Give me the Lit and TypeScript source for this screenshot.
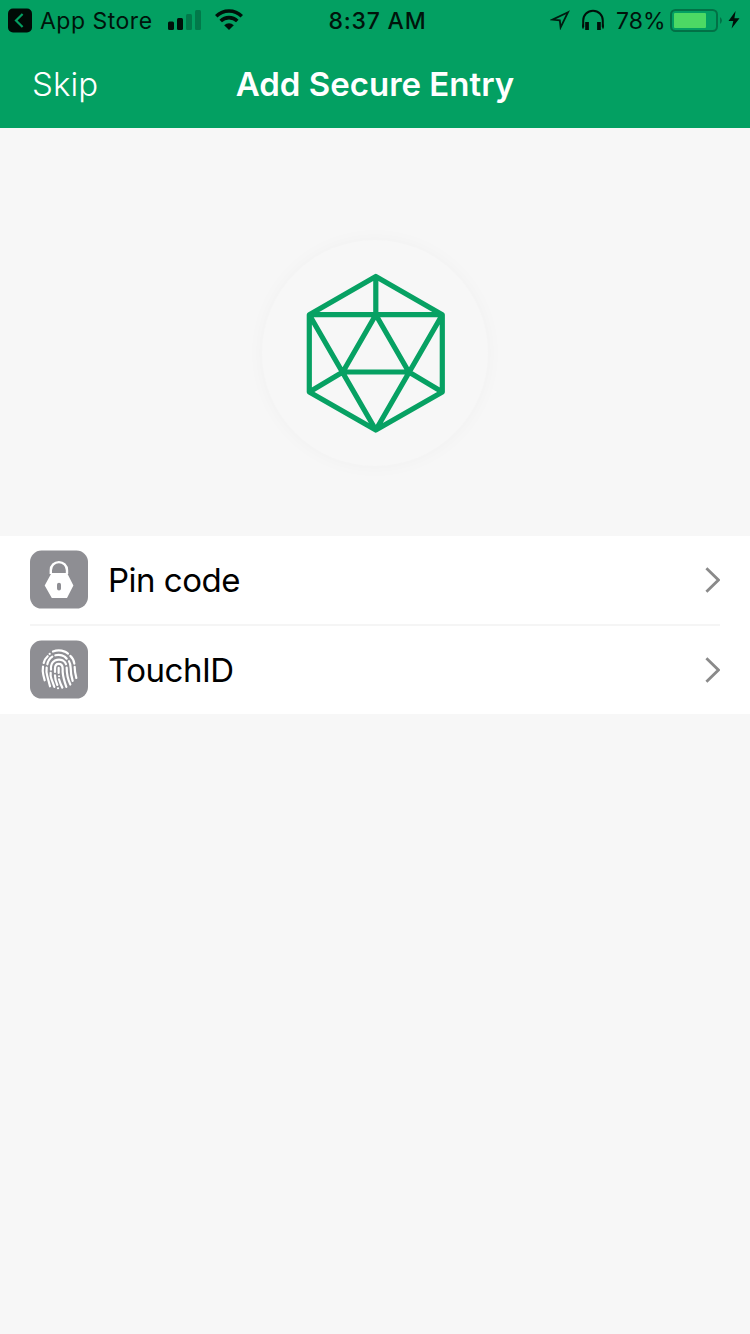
import { LitElement, html, css, svg } from "lit";
import { customElement, property } from "lit/decorators.js";

const lockGlyph = svg`
  <path d="M20.8 23.5V19.6a8 8 0 0 1 16.2 0V23.5" fill="none" stroke="#fff" stroke-width="2.4"/>
  <path fill-rule="evenodd" d="M21.5 22.3h15.6L43.4 35 37 47.4H21.8L14.700 35zM29 32.2a2 2 0 0 0-2 2v3.6a2 2 0 0 0 4 0v-3.6a2 2 0 0 0-2-2z" fill="#fff"/>`;

const fingerprintGlyph = svg`
  <g transform="scale(.33333)" fill="none" stroke="#fff" stroke-width="6.6" stroke-linecap="round">
    <path d="M69 33Q86 26 104 33Q110 36 114 39"/>
    <path d="M59 40h.1"/>
    <path d="M41 67Q44 55 53 47"/>
    <path d="M121 46Q131 55 133 69"/>
    <path d="M39 78Q37 91 40 103L44 119"/>
    <path d="M134 79Q134 93 139 112"/>
    <path d="M52 71Q55 56 67 48"/>
    <path d="M76 44Q92 40 104 48L110 54"/>
    <path d="M117 62Q122 70 122 82Q122 101 128 121"/>
    <path d="M50 81Q48 95 52 107L60 137"/>
    <path d="M63 87Q61 67 75 60Q87 54 99 60Q106 64 108 71"/>
    <path d="M62 97Q61 106 64 114L73 139"/>
    <path d="M110 81Q110 109 121 132"/>
    <path d="M75 94V84Q75 70 86 70Q98 70 98 84V94Q99 111 109 139"/>
    <path d="M75 104Q75 118 82 133"/>
    <path d="M86 82V97"/>
    <path d="M87 107h.1"/>
    <path d="M87 116Q91 130 97 141"/>
    <path d="M84 143h.1"/>
  </g>`;

@customElement("entry-row")
export class EntryRow extends LitElement {
  @property() label = "";
  @property() kind = "lock";

  static styles = css`
    :host { display: flex; align-items: center; height: 88px; }
    .tile { width: 58px; height: 58px; margin-right: 20px; flex: none; overflow: visible; }
    .label {
      flex: 1;
      font-size: 33px;
      line-height: 44px;
      letter-spacing: -.5px;
      color: #000;
      white-space: nowrap;
    }
    .chevron { width: 16px; height: 28px; flex: none; }
  `;

  render() {
    return html`
      <svg class="tile" viewBox="0 .4 58 58">
        <rect width="58" height="58" rx="11.5" fill="#8e8e93"/>
        ${this.kind === "lock" ? lockGlyph : fingerprintGlyph}
      </svg>
      <div class="label">${this.label}</div>
      <svg class="chevron" viewBox="0 0 16 28">
        <path d="M2.4 2.2L14.4 14 2.4 25.8" fill="none" stroke="#8a8a8a" stroke-width="2.8"/>
      </svg>`;
  }
}

@customElement("app-root")
export class AppRoot extends LitElement {
  static styles = css`
    :host {
      display: flex;
      flex-direction: column;
      width: 750px;
      height: 1334px;
      background: #f7f7f7;
      font-family: Inter, "Liberation Sans", sans-serif;
      overflow: hidden;
    }
    header { background: #03a062; height: 128px; flex: none; }
    .status {
      display: grid;
      grid-template-columns: 1fr auto 1fr;
      align-items: center;
      height: 40px;
      color: #00140b;
      font-size: 23px;
      line-height: 38px;
      white-space: nowrap;
    }
    .left, .right { display: flex; align-items: center; height: 40px; }
    .left { padding-left: 8px; }
    .right { justify-content: flex-end; padding-right: 10px; }
    .back { width: 24px; height: 24px; margin-right: 8px; overflow: visible; }
    .store { letter-spacing: .5px; width: 119px; padding-top: 2px; }
    .signal { width: 34px; height: 22px; margin-left: 9px; }
    .wifi { width: 28px; height: 22px; margin-left: 13px; }
    .time { font-weight: 500; letter-spacing: .8px; padding: 2px 0 0 5px; }
    .location { width: 20px; height: 20px; margin-right: 12px; }
    .phones { width: 22px; height: 22px; margin-right: 12px; }
    .percent { width: 49px; margin-right: 5px; padding-top: 2px; }
    .battery { width: 53px; height: 24px; margin-right: 5px; overflow: visible; }
    .bolt { width: 12px; height: 20px; }
    nav {
      display: grid;
      grid-template-columns: 1fr auto 1fr;
      align-items: center;
      height: 88px;
      color: #fff;
      font-size: 33px;
      line-height: 44px;
      white-space: nowrap;
    }
    .skip { padding-left: 32px; font-weight: 350; letter-spacing: .1px; }
    .title { font-weight: 600; }
    .hero {
      display: flex;
      align-items: center;
      justify-content: center;
      height: 408px;
      flex: none;
    }
    .disc {
      display: flex;
      align-items: center;
      justify-content: center;
      width: 226px;
      height: 226px;
      margin-top: 42px;
      border-radius: 50%;
      background: #f7f7f7;
      box-shadow: 0 0 18px rgba(0, 0, 0, .03);
    }
    .gem { width: 140px; height: 160px; }
    .list { background: #fff; padding: 0 30px; height: 178px; flex: none; }
    .divider { height: 2px; background: #f5f5f5; }
  `;

  render() {
    return html`
      <header>
        <div class="status">
          <div class="left">
            <svg class="back" viewBox="0 -.5 24 24">
              <rect width="24" height="24" rx="5" fill="#000b06"/>
              <path d="M14.6 5.5L8 12l6.6 6.500" fill="none" stroke="#03a062" stroke-width="2.2"/>
            </svg>
            <span class="store">App Store</span>
            <svg class="signal" viewBox="0 0 34 22">
              <rect x="0" y="12.5" width="6" height="8.5" rx="1.5" fill="#001009"/>
              <rect x="9" y="9" width="6" height="12" rx="1.5" fill="#001009"/>
              <rect x="18" y="5" width="6" height="16" rx="1.5" fill="#02794a"/>
              <rect x="27" y="1" width="6" height="20" rx="1.5" fill="#02794a"/>
            </svg>
            <svg class="wifi" viewBox="0 0 28 22">
              <path d="M1.2 7.3a18.2 18.2 0 0 1 25.6 0M5.7 12a11.9 11.9 0 0 1 16.6 0" fill="none" stroke="#001009" stroke-width="3.6"/>
              <path d="M9.2 16.2a7 7 0 0 1 9.6 0L14 21z" fill="#001009"/>
            </svg>
          </div>
          <div class="time">8:37 AM</div>
          <div class="right">
            <svg class="location" viewBox="0 0 20 20">
              <path d="M18 2.2L2.500 9.600 9.8 10.300 10.600 17.400z" fill="none" stroke="#001c10" stroke-width="1.8"/>
            </svg>
            <svg class="phones" viewBox="0 0 22 22">
              <path d="M1.2 18V11.5a9.8 9.8 0 0 1 19.6 0V18" fill="none" stroke="#001009" stroke-width="2"/>
              <path d="M3.2 13h3.7v8H3.2zM15.1 13h3.7v8h-3.7z" fill="#001009"/>
              <path d="M1 15.5v4M21 15.5v4" stroke="#001009" stroke-width="1.6"/>
            </svg>
            <span class="percent">78%</span>
            <svg class="battery" viewBox="0 -.5 53 24">
              <rect x="1" y="1.5" width="46" height="21" rx="4.5" fill="none" stroke="#027146" stroke-width="2"/>
              <path d="M50 8.500q4 3.500 0 7z" fill="#027146"/>
              <rect x="4" y="4.500" width="32" height="15" rx="1" fill="#4cd964"/>
            </svg>
            <svg class="bolt" viewBox="0 0 12 20">
              <path d="M7.6 1L.5 11h4.8L3.6 18.5 11.5 8.2H6.4z" fill="#001009"/>
            </svg>
          </div>
        </div>
        <nav>
          <div class="skip">Skip</div>
          <div class="title">Add Secure Entry</div>
          <div></div>
        </nav>
      </header>
      <section class="hero">
        <div class="disc">
          <svg class="gem" viewBox="0 0 140 160">
            <path d="M70.800 3.500L137.300 41.700V119L70.800 157 4.300 119V41.700zM70.800 3.500V41.700M4.300 41.700H137.300M4.300 41.700L70.800 157 137.300 41.700M4.300 119L37.800 99 70.800 41.700 103.800 99 137.300 119M37.800 99H103.800" fill="none" stroke="#07a163" stroke-width="5.200" stroke-linejoin="round"/>
          </svg>
        </div>
      </section>
      <main class="list">
        <entry-row label="Pin code" kind="lock"></entry-row>
        <div class="divider"></div>
        <entry-row label="TouchID" kind="touch"></entry-row>
      </main>`;
  }
}
